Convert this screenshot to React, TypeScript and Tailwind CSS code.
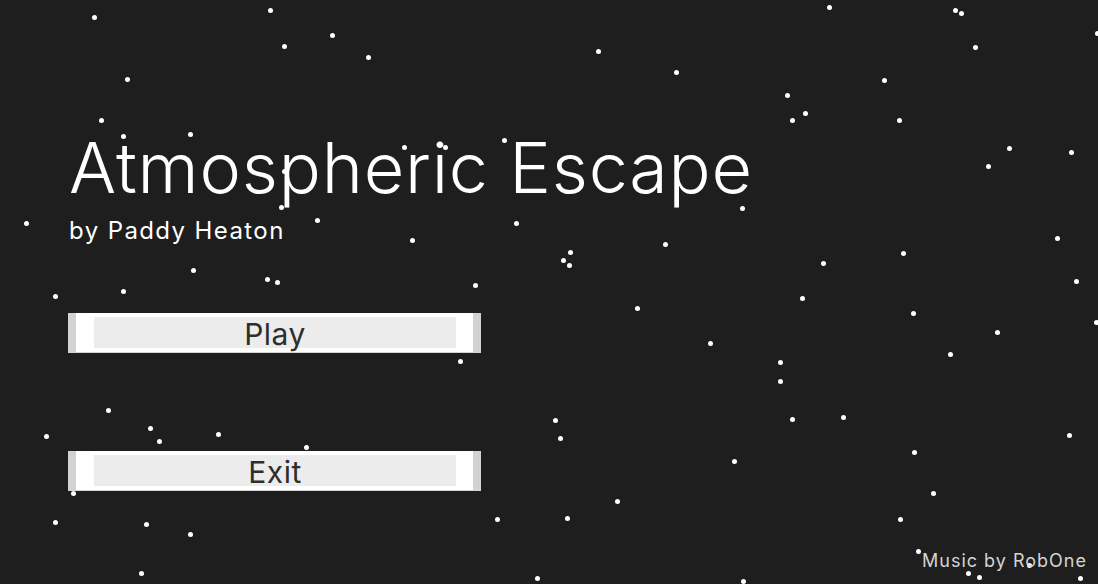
import React from 'react';

// Posiciones fijas de las estrellas del fondo [x, y, tamaño]
const stars: [number, number, number][] = [
  [94, 17, 5], [270, 10, 5], [332, 35, 5], [284, 46, 5], [368, 57, 5],
  [127, 79, 5], [101, 120, 5], [123, 136, 5], [190, 134, 5], [404, 147, 5],
  [445, 147, 5], [504, 140, 5], [284, 171, 5], [281, 207, 5], [317, 220, 5],
  [26, 223, 5], [412, 240, 5], [516, 223, 5], [193, 270, 5], [267, 279, 5],
  [277, 282, 5], [475, 285, 5], [123, 291, 5], [55, 296, 5],
  [829, 7, 5], [955, 10, 5], [961, 13, 5], [1097, 33, 5], [975, 47, 5],
  [598, 51, 5], [676, 72, 5], [884, 80, 5], [787, 95, 5], [805, 113, 5],
  [792, 120, 5], [899, 120, 5], [1009, 148, 5], [1071, 152, 5], [988, 166, 5],
  [742, 208, 5], [665, 244, 5], [570, 252, 5], [563, 260, 5], [569, 265, 5],
  [823, 263, 5], [903, 253, 5], [1057, 238, 5], [1076, 281, 5], [802, 298, 5],
  [460, 361, 5], [108, 410, 5], [46, 436, 5], [150, 428, 5], [159, 441, 5],
  [218, 434, 5], [306, 447, 5], [73, 493, 5], [55, 522, 5], [146, 524, 5],
  [190, 534, 5], [497, 519, 5], [141, 573, 5], [537, 578, 5],
  [637, 308, 5], [913, 313, 5], [997, 332, 5], [1096, 322, 5], [710, 343, 5],
  [950, 354, 5], [780, 362, 5], [780, 381, 5], [555, 420, 5], [560, 438, 5],
  [792, 419, 5], [843, 417, 5], [1069, 435, 5], [914, 452, 5], [734, 461, 5],
  [933, 493, 5], [617, 501, 5], [567, 518, 5], [900, 519, 5], [918, 551, 5],
  [743, 581, 5], [968, 573, 5], [979, 577, 5], [1029, 565, 5], [1080, 578, 5],
];

const MenuButton = ({ label }: { label: string }) => (
  <button className="w-[413px] h-[40px] bg-[#d2d2d2] px-[8px] pb-[1px] cursor-pointer">
    <div className="h-full bg-white pl-[18px] pr-[17px] py-[4px]">
      <div className="h-full bg-[#ececec] flex items-center justify-center text-[30px] leading-none text-[#2e2e2e] tracking-[0.5px] pt-[3px]">
        {label}
      </div>
    </div>
  </button>
);

export default function App() {
  return (
    <div
      className="relative w-[1098px] h-[584px] overflow-hidden bg-[#1e1e1e] text-white"
      style={{ fontFamily: 'Inter, "Noto Sans", sans-serif' }}
    >
      {/* Campo de estrellas */}
      <div className="absolute inset-0">
        {stars.map(([x, y, s], i) => (
          <div
            key={i}
            className="absolute rounded-full bg-white"
            style={{ left: x - s / 2, top: y - s / 2, width: s, height: s }}
          />
        ))}
      </div>

      {/* Menú principal */}
      <div className="relative flex flex-col pl-[68px] pt-[133px]">
        <h1 className="text-[70px] leading-none font-light tracking-[0.8px] pl-[1px]">Atmospheric Escape</h1>
        <p className="mt-[16px] text-[24px] leading-none tracking-[1.4px] pl-[1px]">by Paddy Heaton</p>

        <div className="mt-[70px] flex flex-col gap-[98px]">
          <MenuButton label="Play" />
          <MenuButton label="Exit" />
        </div>
      </div>

      <p className="absolute right-[11px] bottom-[14px] text-[18px] leading-none text-[#d4d4d4] tracking-[1px]">
        Music by RobOne
      </p>
    </div>
  );
}
